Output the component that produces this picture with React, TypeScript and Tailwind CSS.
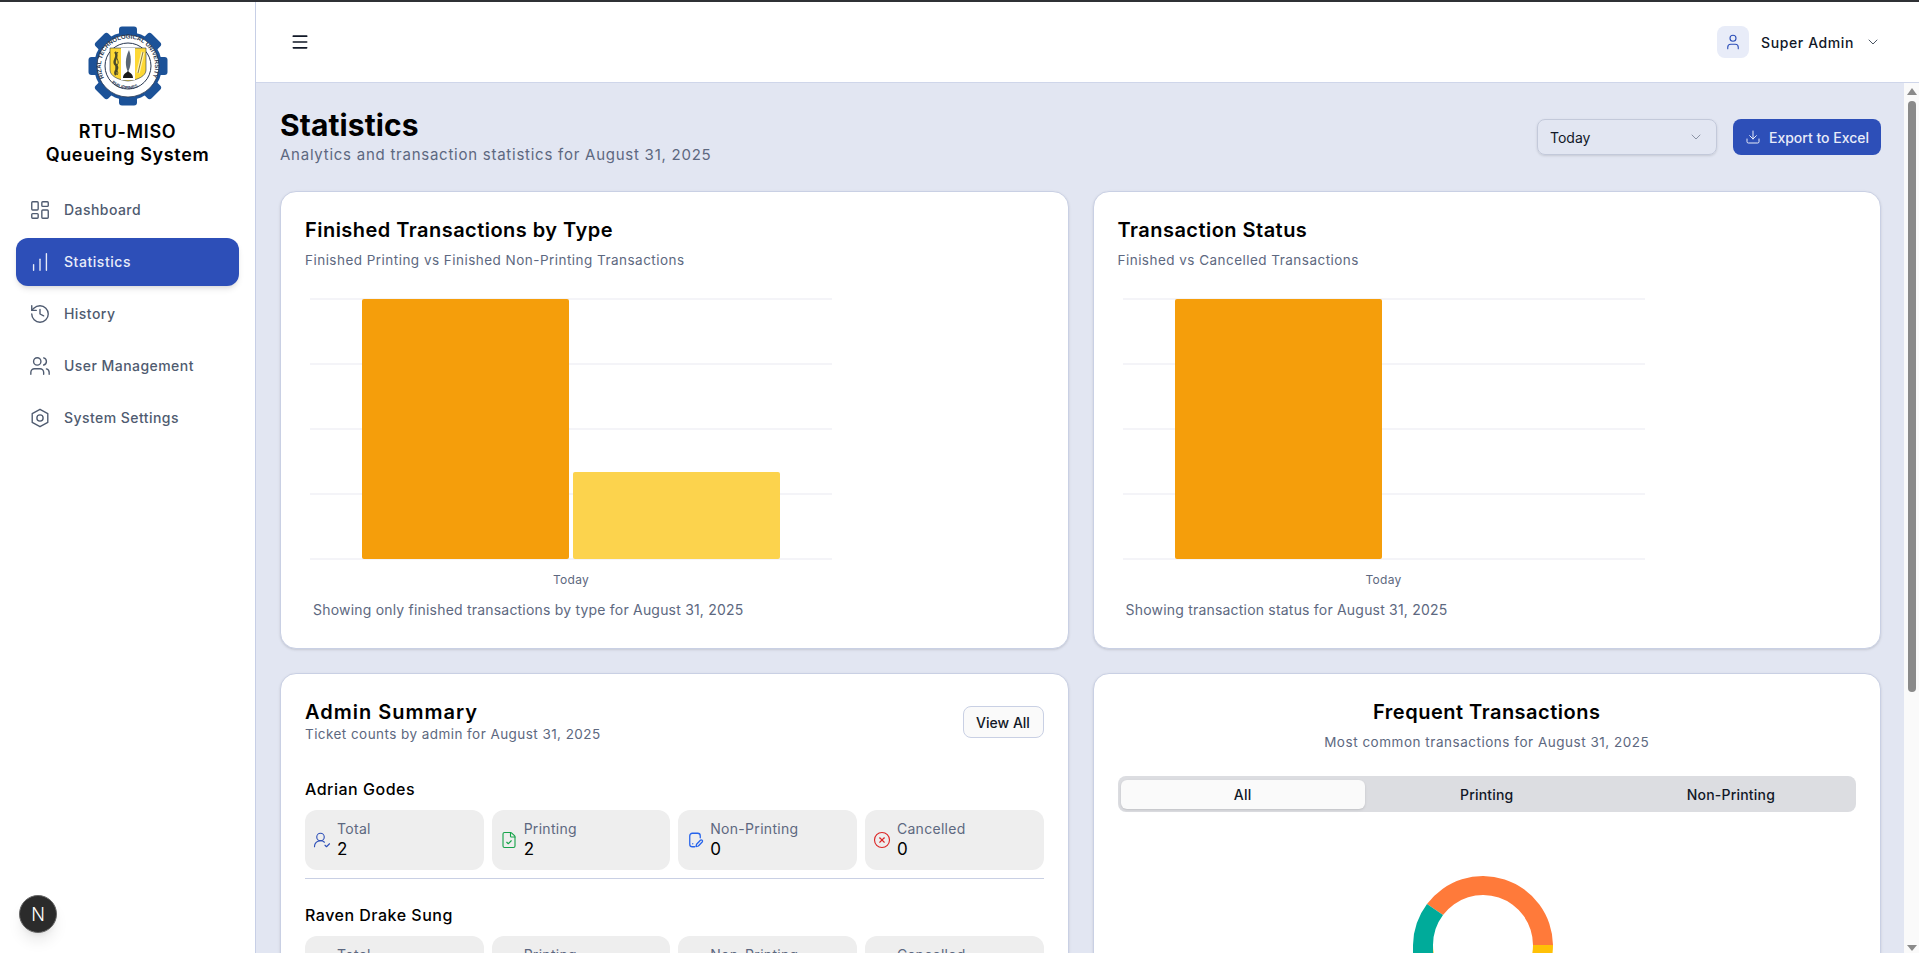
import {
  ChartNoAxesColumnIncreasing,
  ChevronDown,
  CircleX,
  Download,
  FileCheck,
  History,
  LayoutDashboard,
  Menu,
  User,
  UserRoundCheck,
  Users,
} from "lucide-react";

const gearTeeth = [0, 45, 90, 135, 180, 225, 270, 315];

function Logo() {
  return (
    <svg viewBox="0 0 80 80" className="h-[80px] w-[80px]">
      <defs>
        <path id="ringTop" d="M 16 52 A 27 27 0 1 1 64 52" />
        <path id="ringBottom" d="M 22 55 A 24 24 0 0 0 58 55" />
      </defs>
      {gearTeeth.map((a) => (
        <rect key={a} x="31" y="0.5" width="18" height="14" rx="3" fill="#1c5298" transform={`rotate(${a} 40 40)`} />
      ))}
      <circle cx="40" cy="40" r="34" fill="#1c5298" />
      <circle cx="40" cy="40" r="31" fill="#fff" />
      <circle cx="40" cy="40" r="31" fill="none" stroke="#27364f" strokeWidth="0.8" />
      <circle cx="40" cy="40" r="23" fill="#fff" stroke="#27364f" strokeWidth="1" />
      <text fontSize="6" fontFamily="Liberation Sans, sans-serif" fontWeight="700" fill="#27364f">
        <textPath href="#ringTop">RIZAL TECHNOLOGICAL UNIVERSITY</textPath>
      </text>
      <text fontSize="4.5" fontFamily="Liberation Sans, sans-serif" fontWeight="700" fill="#27364f">
        <textPath href="#ringBottom" startOffset="6%">PHILIPPINES</textPath>
      </text>
      <path d="M22 22 H58 V44 C58 50 50 54 40 55 C30 54 22 50 22 44 Z" fill="#fdd835" stroke="#27364f" strokeWidth="0.6" />
      <rect x="33" y="22" width="14" height="32" fill="#fff" />
      <path d="M27 26 C32 31 23 35 28 39 C32 43 25 45 28 49" fill="none" stroke="#4a4a2a" strokeWidth="2.4" />
      <path d="M30 26 C25 31 33 35 29 39 C25 43 32 45 29 49" fill="none" stroke="#4a4a2a" strokeWidth="1" />
      <path d="M41 24 C44 32 43 40 40 46 C37 40 37 32 41 24 Z" fill="#5b6775" />
      <path d="M35 52 C35 48 38 47 40 45 C42 47 45 48 45 52 Z" fill="#1c1c1c" />
      <path d="M55 26 L50 47" stroke="#fff3b0" strokeWidth="3.4" />
      <path d="M55 26 L50 47" stroke="#6b5a20" strokeWidth="0.8" />
    </svg>
  );
}

function HexSettings({ className }: { className?: string }) {
  return (
    <svg viewBox="0 0 24 24" fill="none" stroke="currentColor" strokeWidth="1.5" strokeLinejoin="round" className={className}>
      <path d="M12 2.5 20.5 7.2v9.6L12 21.5l-8.5-4.7V7.2Z" />
      <circle cx="12" cy="12" r="3.4" />
    </svg>
  );
}

function DocPen({ className }: { className?: string }) {
  return (
    <svg viewBox="0 0 24 24" fill="none" stroke="currentColor" strokeWidth="1.7" strokeLinecap="round" strokeLinejoin="round" className={className}>
      <path d="M19 9V6.5A3.5 3.5 0 0 0 15.5 3H8.5A3.5 3.5 0 0 0 5 6.5v11A3.5 3.5 0 0 0 8.5 21h3" />
      <path d="M19.2 12.3a1.7 1.7 0 0 1 2.4 2.4L16.5 20l-3.2.8.8-3.2Z" />
      <path d="M9 17h.01" />
    </svg>
  );
}

const navItems = [
  { label: "Dashboard", icon: LayoutDashboard },
  { label: "Statistics", icon: ChartNoAxesColumnIncreasing, active: true },
  { label: "History", icon: History },
  { label: "User Management", icon: Users },
  { label: "System Settings", icon: HexSettings },
];

function Sidebar() {
  return (
    <aside className="relative flex w-[256px] shrink-0 flex-col border-r border-[#c7cfe6] bg-white">
      <div className="flex flex-col items-center pt-[24px]">
        <Logo />
        <h1 className="mt-[14px] text-center text-[18px] leading-[23px] font-semibold tracking-[0.65px] text-black">
          RTU-MISO
          <br />
          Queueing System
        </h1>
      </div>
      <nav className="mt-[20px] flex flex-col gap-1 px-4">
        {navItems.map((item) => (
          <a
            key={item.label}
            className={
              item.active
                ? "flex h-12 items-center gap-[13px] rounded-xl bg-[#2d4fb8] px-[13px] text-[14px] font-medium tracking-[0.55px] text-[#e8ecf8] shadow-md"
                : "flex h-12 items-center gap-[13px] rounded-xl px-[13px] text-[14px] font-medium tracking-[0.45px] text-[#4f5b70]"
            }
          >
            <item.icon className="h-[22px] w-[22px] shrink-0" strokeWidth={1.5} />
            <span className="pb-[1px]">{item.label}</span>
          </a>
        ))}
      </nav>
      {/* next dev badge */}
      <div className="absolute bottom-[20px] left-[19px] flex h-[38px] w-[38px] items-center justify-center rounded-full border border-[#666] bg-[#2b2b2b] text-[18px] font-light text-white shadow-lg">
        N
      </div>
    </aside>
  );
}

function Header() {
  return (
    <header className="flex h-[81px] shrink-0 items-center justify-between border-b border-[#cfd6ea] bg-white pr-[38px] pl-[34px]">
      <Menu className="h-5 w-5 text-[#111827]" strokeWidth={2} />
      <div className="flex items-center gap-3">
        <div className="flex h-8 w-8 items-center justify-center rounded-lg bg-[#e8ecf8]">
          <User className="h-[18px] w-[18px] text-[#2d4fb8]" strokeWidth={1.5} />
        </div>
        <span className="text-[14px] font-medium tracking-[0.6px] text-[#111827]">Super Admin</span>
        <ChevronDown className="ml-[-1px] h-4 w-4 text-[#4b5563]" strokeWidth={1.5} />
      </div>
    </header>
  );
}

function BarChart({ bars }: { bars: { x: number; top: number; color: string }[] }) {
  return (
    <svg width="530" height="262" className="mt-[28px] ml-[5px] block">
      {[1, 66, 131, 196, 261].map((y) => (
        <line key={y} x1="0" x2="522" y1={y} y2={y} stroke="#f1f1f6" strokeWidth="1.5" />
      ))}
      {bars.map((b) => (
        <rect key={b.x} x={b.x} y={b.top} width="207" height={261 - b.top} rx="2" fill={b.color} />
      ))}
    </svg>
  );
}

function ChartCard({
  title,
  sub,
  foot,
  bars,
}: {
  title: string;
  sub: string;
  foot: string;
  bars: { x: number; top: number; color: string }[];
}) {
  return (
    <section className="h-[458px] rounded-2xl border border-[#c9d0e4] bg-white p-6 shadow-sm">
      <h2 className="text-[20px] leading-7 font-semibold tracking-[0.47px] text-black">{title}</h2>
      <p className="mt-[6px] text-[13.5px] leading-5 tracking-[0.47px] text-[#5d6880]">{sub}</p>
      <BarChart bars={bars} />
      <div className="mt-[12px] w-[532px] text-center text-[12px] leading-4 tracking-[0.3px] text-[#5d6880]">Today</div>
      <p className="mt-[12px] ml-[8px] text-[14px] leading-5 tracking-[0.2px] text-[#5d6880]">{foot}</p>
    </section>
  );
}

const stats = [
  { label: "Total", icon: UserRoundCheck, color: "text-[#2d4fb8]" },
  { label: "Printing", icon: FileCheck, color: "text-[#16a34a]" },
  { label: "Non-Printing", icon: DocPen, color: "text-[#2563eb]" },
  { label: "Cancelled", icon: CircleX, color: "text-[#dc2626]" },
];

function AdminRow({ name, values, divider }: { name: string; values: number[]; divider?: boolean }) {
  return (
    <div className={divider ? "border-b border-[#c9d0e4] pb-2" : ""}>
      <h3 className="text-[16px] leading-6 font-medium tracking-[0.5px] text-black">{name}</h3>
      <div className="mt-[9px] grid grid-cols-4 gap-2">
        {stats.map((s, i) => (
          <div key={s.label} className="flex h-[60px] items-center gap-[6px] rounded-xl bg-[#eeeeee] px-2">
            <s.icon className={`h-[18px] w-[18px] shrink-0 ${s.color}`} strokeWidth={1.5} />
            <div className="pb-[2px]">
              <div className="text-[14px] leading-5 tracking-[0.3px] text-[#5d6880]">{s.label}</div>
              <div className="text-[17px] leading-5 font-normal text-black">{values[i]}</div>
            </div>
          </div>
        ))}
      </div>
    </div>
  );
}

function AdminSummary() {
  return (
    <section className="h-[600px] rounded-2xl border border-[#c9d0e4] bg-white p-6 shadow-sm">
      <div className="flex items-start justify-between">
        <div className="mt-[2px]">
          <h2 className="text-[20px] leading-6 font-semibold tracking-[1px] text-black">Admin Summary</h2>
          <p className="text-[13.5px] leading-5 tracking-[0.44px] text-[#5d6880]">Ticket counts by admin for August 31, 2025</p>
        </div>
        <button className="mt-[8px] h-[32px] w-[81px] rounded-lg border border-[#c9d0e4] bg-[#fafafa] text-[14px] font-medium text-[#111827]">
          View All
        </button>
      </div>
      <div className="mt-[33px] flex flex-col gap-[24px]">
        <AdminRow name="Adrian Godes" values={[2, 2, 0, 0]} divider />
        <AdminRow name="Raven Drake Sung" values={[0, 0, 0, 0]} />
      </div>
    </section>
  );
}

function Donut() {
  // cx 70, cy 70 inside a 140px box, ring 50..70
  return (
    <svg width="140" height="140" viewBox="0 0 140 140" className="mx-auto mt-[63px] -translate-x-[4px]">
      <path d="M0 70 A70 70 0 0 0 140 70 L120 70 A50 50 0 0 1 20 70 Z" fill="#ffc107" />
      <path d="M14 29 A70 70 0 0 1 140 70 L120 70 A50 50 0 0 0 30 40 Z" fill="#ff7a3a" />
      <path d="M14 29 L30 40 A50 50 0 0 0 20 70 L20 100 L0 100 L0 70 A70 70 0 0 1 14 29 Z" fill="#00ab9a" />
    </svg>
  );
}

function FrequentCard() {
  return (
    <section className="h-[600px] rounded-2xl border border-[#c9d0e4] bg-white p-6 shadow-sm">
      <h2 className="text-center text-[20px] leading-7 font-semibold tracking-[0.5px] text-black">Frequent Transactions</h2>
      <p className="mt-[6px] text-center text-[13.5px] leading-5 tracking-[0.52px] text-[#5d6880]">
        Most common transactions for August 31, 2025
      </p>
      <div className="mt-[24px] grid h-[36px] grid-cols-3 items-center rounded-lg bg-[#dcdde1] px-[3px] text-center text-[14px] font-medium tracking-[0.2px] text-[#111827]">
        <div className="flex h-[29px] items-center justify-center rounded-md bg-[#fafafa] shadow-sm">All</div>
        <div>Printing</div>
        <div>Non-Printing</div>
      </div>
      <Donut />
    </section>
  );
}

function Scrollbar() {
  return (
    <div className="flex w-[15px] shrink-0 flex-col items-center justify-between bg-[#fafafa] pt-[5px] pb-[2px]">
      <div className="flex h-[604px] w-full flex-col items-center gap-[6px]">
        <div className="h-0 w-0 border-x-[5px] border-b-[7px] border-x-transparent border-b-[#8a8a8a]" />
        <div className="w-[8px] flex-1 rounded-full bg-[#8a8a8a]" />
      </div>
      <div className="h-0 w-0 border-x-[5px] border-t-[6px] border-x-transparent border-t-[#8a8a8a]" />
    </div>
  );
}

export default function App() {
  return (
    <div
      className="flex h-screen flex-col overflow-hidden border-t-2 border-[#2f3135] bg-white"
      style={{ fontFamily: "Inter, 'Noto Sans', sans-serif" }}
    >
      <div className="flex min-h-0 flex-1">
        <Sidebar />
        <main className="flex min-w-0 flex-1 flex-col">
          <Header />
          <div className="flex min-h-0 flex-1">
            <div className="min-w-0 flex-1 overflow-hidden bg-[#e2e6f2] pt-6 pr-[23px] pl-6">
              <div className="mb-6 flex h-[60px] items-center justify-between">
                <div>
                  <h1 className="text-[30px] leading-9 font-bold tracking-[0.1px] text-black">Statistics</h1>
                  <p className="text-[15px] leading-6 tracking-[0.75px] text-[#5d6880]">
                    Analytics and transaction statistics for August 31, 2025
                  </p>
                </div>
                <div className="flex items-center gap-4">
                  <div className="flex h-[36px] w-[180px] items-center justify-between rounded-lg border border-[#c3c9da] px-3 text-[14px] text-[#111827] shadow-sm">
                    Today
                    <ChevronDown className="h-4 w-4 text-[#8b93a5]" strokeWidth={1.5} />
                  </div>
                  <button className="flex h-[36px] w-[148px] items-center justify-center gap-2 rounded-lg bg-[#2d4fb8] text-[14px] font-medium text-[#e8ecf8]">
                    <Download className="h-4 w-4" strokeWidth={1.5} />
                    Export to Excel
                  </button>
                </div>
              </div>
              <div className="grid grid-cols-2 gap-6">
                <ChartCard
                  title="Finished Transactions by Type"
                  sub="Finished Printing vs Finished Non-Printing Transactions"
                  foot="Showing only finished transactions by type for August 31, 2025"
                  bars={[
                    { x: 52, top: 1, color: "#f59e0b" },
                    { x: 263, top: 174, color: "#fcd34d" },
                  ]}
                />
                <ChartCard
                  title="Transaction Status"
                  sub="Finished vs Cancelled Transactions"
                  foot="Showing transaction status for August 31, 2025"
                  bars={[{ x: 52, top: 1, color: "#f59e0b" }]}
                />
                <AdminSummary />
                <FrequentCard />
              </div>
            </div>
            <Scrollbar />
          </div>
        </main>
      </div>
    </div>
  );
}
